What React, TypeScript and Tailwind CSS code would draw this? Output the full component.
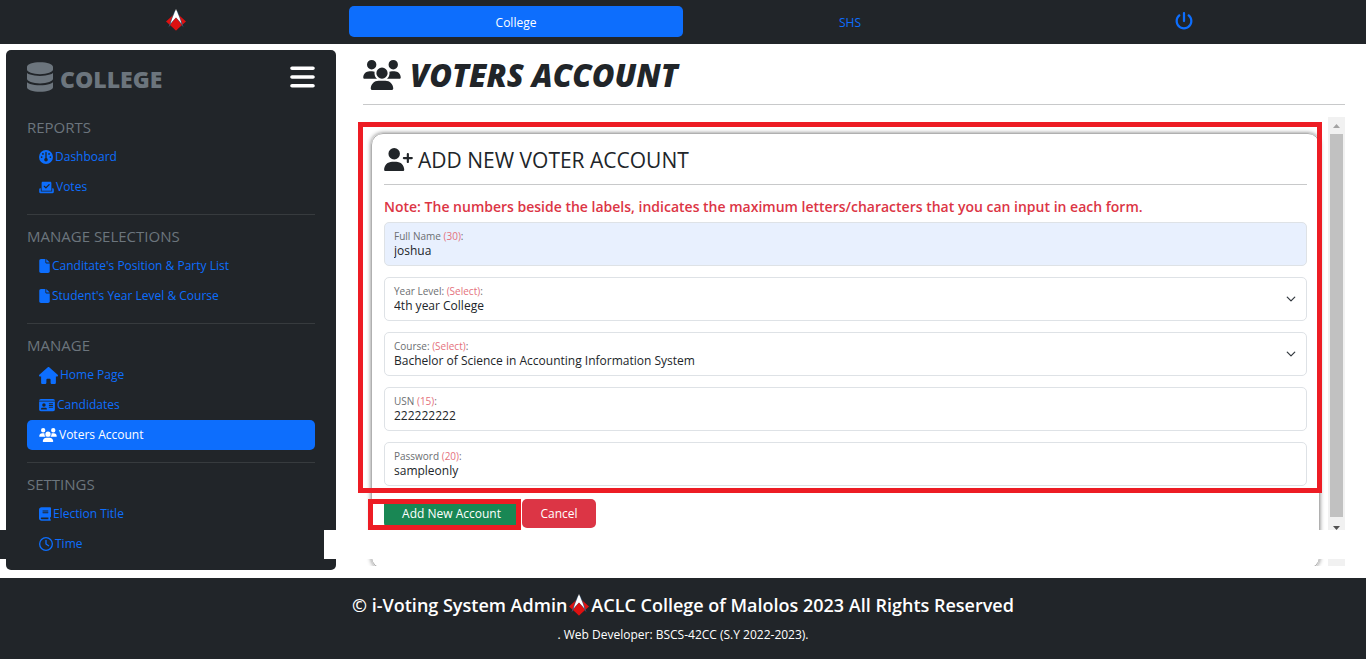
import type { ReactNode } from "react";
import type { IconType } from "react-icons";
import {
  FaBars,
  FaBook,
  FaCheckToSlot,
  FaDatabase,
  FaFile,
  FaGauge,
  FaHouse,
  FaIdCard,
  FaPowerOff,
  FaRegClock,
  FaUserPlus,
  FaUsers,
} from "react-icons/fa6";

type NavItem = { label: string; icon: IconType; size: string; active?: boolean };

const sections: { title: string; items: NavItem[] }[] = [
  {
    title: "REPORTS",
    items: [
      { label: "Dashboard", icon: FaGauge, size: "h-[14px] w-[14px]" },
      { label: "Votes", icon: FaCheckToSlot, size: "h-[13px] w-[15px]" },
    ],
  },
  {
    title: "MANAGE SELECTIONS",
    items: [
      { label: "Canditate's Position & Party List", icon: FaFile, size: "h-[14px] w-[11px]" },
      { label: "Student's Year Level & Course", icon: FaFile, size: "h-[14px] w-[11px]" },
    ],
  },
  {
    title: "MANAGE",
    items: [
      { label: "Home Page", icon: FaHouse, size: "h-[17px] w-[19px]" },
      { label: "Candidates", icon: FaIdCard, size: "h-[14px] w-[16px]" },
      { label: "Voters Account", icon: FaUsers, size: "h-[14px] w-[18px]", active: true },
    ],
  },
  {
    title: "SETTINGS",
    items: [
      { label: "Election Title", icon: FaBook, size: "h-[14px] w-[12px]" },
      { label: "Time", icon: FaRegClock, size: "h-[14px] w-[14px]" },
    ],
  },
];

function Logo() {
  return (
    <svg viewBox="0 0 20 22" className="h-[22px] w-5 shrink-0" role="img" aria-label="ACLC">
      <path d="M10 3.5 L20 12.5 L10 21.5 L0 12.5 Z" fill="#dd1111" />
      <path d="M8.6 2 L5 11 L2.4 18.5 L6 14 L10 9 L14 14 L17.6 18.5 L15 11 L11.4 2 Z" fill="#3f5a78" />
      <path d="M10 0 L6 10 L4.6 14.5 L7.6 11 L10 8.6 L12.4 11 L15.4 14.5 L14 10 Z" fill="#ffffff" />
      <path d="M10 8.8 L15.6 15.4 L10 21.5 L4.4 15.4 Z" fill="#dd1111" />
    </svg>
  );
}

function Sidebar() {
  return (
    <aside className="w-[330px] shrink-0 rounded-[5px] bg-[#212529] px-[21px] pt-3 pb-[11px]">
      <div className="flex h-[30px] items-center justify-between">
        <div className="flex items-center gap-[7px] text-[#6c757d]">
          <FaDatabase className="h-[30px] w-[26px]" />
          <span className="pt-1 text-[23px] leading-[30px] font-extrabold">COLLEGE</span>
        </div>
        <button type="button" aria-label="Toggle menu" className="text-white">
          <FaBars className="h-7 w-[25px]" />
        </button>
      </div>
      <nav className="mt-[23px]">
        {sections.map((section, i) => (
          <section key={section.title} className={i > 0 ? "mt-3 border-t border-[#373b3e]" : ""}>
            <h2 className="mt-[9px] mb-[3px] text-[15px] leading-6 text-[#6c757d]">{section.title}</h2>
            {section.items.map(({ label, icon: Icon, size, active }) => (
              <a
                key={label}
                href="#"
                className={
                  active
                    ? "flex h-[30px] items-center gap-[2px] rounded-[5px] bg-[#0d6efd] px-3 text-[12px] text-white"
                    : "flex h-[30px] items-center gap-[2px] rounded-[5px] px-3 text-[12px] text-[#0d6efd]"
                }
              >
                <Icon className={size} />
                {label}
              </a>
            ))}
          </section>
        ))}
      </nav>
    </aside>
  );
}

function Field({
  id,
  label,
  hint,
  filled,
  chevron,
  children,
}: {
  id: string;
  label: string;
  hint: string;
  filled?: boolean;
  chevron?: boolean;
  children: ReactNode;
}) {
  return (
    <div
      className={
        filled
          ? "flex h-11 items-center rounded-[5px] border border-[#dee2e6] bg-[#e8f0fe] px-[9px]"
          : "flex h-11 items-center rounded-[5px] border border-[#dee2e6] bg-white px-[9px]"
      }
    >
      <div className="flex flex-1 flex-col">
        <label htmlFor={id} className="text-[10px] leading-[14px] text-[#6b6e71]">
          {label} <span className="text-[#e4717c]">({hint})</span>:
        </label>
        {children}
      </div>
      {chevron && (
        <svg viewBox="0 0 16 16" className="mr-px h-[10px] w-[10px] shrink-0" aria-hidden="true">
          <path d="m2 5 6 6 6-6" fill="none" stroke="#343a40" strokeWidth="2" strokeLinecap="round" strokeLinejoin="round" />
        </svg>
      )}
    </div>
  );
}

const control = "w-full appearance-none bg-transparent p-0 text-[12px] leading-4 text-[#212529] outline-none";

function VoterForm() {
  return (
    <form className="mx-2 mt-4 rounded-[12px] border border-[#b0b0b0] px-3 pb-10 shadow-[0_0_4px_rgba(0,0,0,0.5)]">
      <h2 className="flex h-[51px] items-center gap-[5px] border-b border-[#c8c9ca] text-[21px] text-[#212529]">
        <FaUserPlus className="h-[23px] w-[29px]" />
        <span className="pt-[3px]">ADD NEW VOTER ACCOUNT</span>
      </h2>
      <p className="mt-[10px] mb-[3px] text-[14px] leading-6 font-semibold text-[#dc3545]">
        Note: The numbers beside the labels, indicates the maximum letters/characters that you can input in each form.
      </p>
      <div className="flex flex-col gap-[11px]">
        <Field id="name" label="Full Name" hint="30" filled>
          <input id="name" maxLength={30} defaultValue="joshua" className={control} />
        </Field>
        <Field id="year" label="Year Level:" hint="Select" chevron>
          <select id="year" className={control}>
            <option>4th year College</option>
          </select>
        </Field>
        <Field id="course" label="Course:" hint="Select" chevron>
          <select id="course" className={control}>
            <option>Bachelor of Science in Accounting Information System</option>
          </select>
        </Field>
        <Field id="usn" label="USN" hint="15">
          <input id="usn" maxLength={15} defaultValue="222222222" className={control} />
        </Field>
        <Field id="password" label="Password" hint="20">
          <input id="password" maxLength={20} defaultValue="sampleonly" className={control} />
        </Field>
      </div>
      <div className="mt-[13px] flex gap-[3px]">
        <div className="relative">
          <button type="button" className="h-[29px] w-[135px] rounded-[5px] bg-[#198754] text-[12px] text-white">
            Add New Account
          </button>
          <div className="pointer-events-none absolute top-0 -left-4 h-[31px] w-[153px] border-5 border-[#ed1c24] bg-[linear-gradient(to_right,#ffffff_11px,transparent_11px)]" />
        </div>
        <button type="button" className="h-[29px] w-[74px] rounded-[5px] bg-[#dc3545] text-[12px] text-white">
          Cancel
        </button>
      </div>
    </form>
  );
}

function ScrollTrack() {
  return (
    <div className="flex w-[17px] shrink-0 flex-col items-center bg-[#f1f1f1]" aria-hidden="true">
      <svg viewBox="0 0 17 17" className="h-[17px] w-[17px]">
        <path d="M5 11 L8.5 7 L12 11 Z" fill="#a3a3a3" />
      </svg>
      <div className="h-[383px] w-[13px] bg-[#c1c1c1]" />
      <svg viewBox="0 0 17 17" className="h-[17px] w-[17px]">
        <path d="M5 9 L8.5 13 L12 9 Z" fill="#505050" />
      </svg>
    </div>
  );
}

export default function App() {
  return (
    <div className="flex min-h-screen flex-col bg-white font-['Open_Sans','Noto_Sans',sans-serif]">
      <header className="grid h-11 grid-cols-4 items-start bg-[#212529] px-[15px] pt-[6px] text-[12px] text-[#0d6efd]">
        <a href="#" className="flex justify-center pt-[3px] pr-3">
          <Logo />
        </a>
        <a href="#" className="flex h-[31px] items-center justify-center rounded-[5px] bg-[#0d6efd] pt-[2px] text-white">
          College
        </a>
        <a href="#" className="flex h-[31px] items-center justify-center pt-[2px]">
          SHS
        </a>
        <a href="#" aria-label="Log out" className="flex justify-center pt-[6px]">
          <FaPowerOff className="h-[18px] w-[18px]" />
        </a>
      </header>

      <div className="relative flex flex-1 gap-[27px] pt-[6px] pr-[21px] pb-2 pl-[6px]">
        <Sidebar />
        <main className="min-w-0 flex-1 pt-[10px]">
          <h1 className="flex h-[45px] items-start gap-[9px] border-b border-[#c8c9ca] text-[31px] leading-[30px] font-extrabold text-[#212529] italic">
            <FaUsers className="h-[30px] w-[38px]" />
            VOTERS ACCOUNT
          </h1>
          <div className="relative mt-3">
            <div className="flex h-[449px] overflow-hidden">
              <div className="min-w-0 flex-1">
                <VoterForm />
              </div>
              <ScrollTrack />
            </div>
            <div className="pointer-events-none absolute top-[5px] right-[23px] -left-[5px] h-[371px] border-5 border-[#ed1c24]" />
          </div>
        </main>
        <div className="absolute bottom-[19px] left-0 h-[29px] w-[6px] bg-[#212529]" aria-hidden="true" />
        <div className="absolute right-0 bottom-[19px] left-[324px] h-[29px] bg-white" aria-hidden="true" />
      </div>

      <footer className="flex h-[81px] flex-col items-center bg-[#212529] pt-[14px] text-white">
        <p className="flex items-center gap-[2px] text-[18px] leading-[26px] font-semibold">
          © i-Voting System Admin <Logo /> ACLC College of Malolos 2023 All Rights Reserved
        </p>
        <p className="mt-2 text-[12px] leading-[18px]">. Web Developer: BSCS-42CC (S.Y 2022-2023).</p>
      </footer>
    </div>
  );
}
